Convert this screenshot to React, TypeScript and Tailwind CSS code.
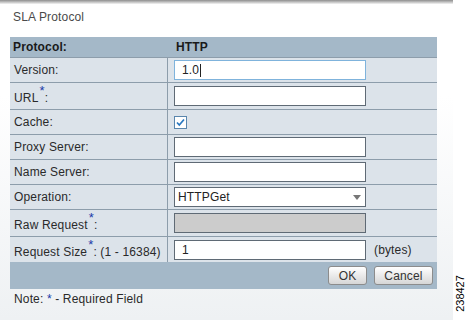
import React from "react";

const Star = () => (
  <span className="relative top-[-7px] ml-[1px] text-[13px] leading-none text-[#1a3aa8]">*</span>
);

function Row({
  label,
  h,
  children,
}: {
  label: React.ReactNode;
  h: string;
  children?: React.ReactNode;
}) {
  return (
    <div className={`flex border-t border-[#8d9dab] bg-[#dce3ea] ${h}`}>
      <div className="flex w-[158px] items-center border-r border-[#8d9dab] pl-[4px] text-[#2a2a2a]">
        {label}
      </div>
      <div className="flex flex-1 items-center pl-[6px]">{children}</div>
    </div>
  );
}

const Input = ({ value, focus, disabled }: { value?: string; focus?: boolean; disabled?: boolean }) => (
  <div
    className={`flex h-[20px] w-[192px] items-center border pl-[7px] text-[12px] text-[#222] ${
      focus ? "border-[#7fb3dc]" : "border-[#5f6a75]"
    } ${disabled ? "bg-[#cccccc]" : "bg-white"}`}
  >
    {value}
    {focus && <span className="ml-[1px] inline-block h-[13px] w-[1px] bg-[#222]" />}
  </div>
);

export default function App() {
  return (
    <div className="relative flex h-[320px] w-[466px] bg-white font-['Liberation_Sans',Arial,sans-serif] text-[12px] tracking-[0.15px]">
      <div className="flex h-full w-[453px] flex-col bg-gradient-to-b from-white from-30% to-[#eef1f3]">
        <div className="h-[4px] bg-gradient-to-b from-[#8e8e8e] to-[#f4f4f4]" />
        <div className="pl-[13px] pt-[6px] leading-[14px] text-[#4a4a4a]">SLA Protocol</div>
        <div className="ml-[10px] mt-[13px] w-[427px]">
          <div className="flex h-[20px] items-center bg-[#a4b8c8] font-bold text-[#1a1a1a]">
            <div className="w-[158px] pl-[3px]">Protocol:</div>
            <div className="pl-[8px]">HTTP</div>
          </div>
          <Row label="Version:" h="h-[25px]">
            <Input value="1.0" focus />
          </Row>
          <Row
            label={
              <span className="mt-[4px]">
                URL<Star />:
              </span>
            }
            h="h-[27px]"
          >
            <Input />
          </Row>
          <Row label="Cache:" h="h-[25px]">
            <svg width="13" height="13" viewBox="0 0 13 13" className="ml-[0px]">
              <rect x="0.5" y="0.5" width="12" height="12" fill="#fff" stroke="#5a86ad" />
              <path d="M3 6.5 L5.3 9 L10 3.5" fill="none" stroke="#2a78c0" strokeWidth="1.7" />
            </svg>
          </Row>
          <Row label="Proxy Server:" h="h-[25px]">
            <Input />
          </Row>
          <Row label="Name Server:" h="h-[25px]">
            <Input />
          </Row>
          <Row label="Operation:" h="h-[25px]">
            <div className="flex h-[20px] w-[192px] items-center justify-between border border-[#5f6a75] bg-white pl-[3px] pr-[4px] text-[12px] text-[#222]">
              <span>HTTPGet</span>
              <svg width="8" height="5" viewBox="0 0 8 5">
                <path d="M0 0 H8 L4 5 Z" fill="#777" />
              </svg>
            </div>
          </Row>
          <Row
            label={
              <span className="mt-[4px]">
                Raw Request<Star />:
              </span>
            }
            h="h-[27px]"
          >
            <Input disabled />
          </Row>
          <Row
            label={
              <span className="mt-[4px]">
                Request Size<Star />: (1 - 16384)
              </span>
            }
            h="h-[26px]"
          >
            <Input value="1" />
            <span className="ml-[8px] text-[#2a2a2a]">(bytes)</span>
          </Row>
          <div className="flex h-[27px] items-center justify-end gap-[7px] bg-[#a4b8c8] pr-[4px]">
            <button className="h-[19px] w-[39px] rounded-[3px] border border-[#8c8c8c] bg-gradient-to-b from-white to-[#d6d6d6] text-[12px] leading-none text-[#333]">
              OK
            </button>
            <button className="h-[19px] w-[59px] rounded-[3px] border border-[#8c8c8c] bg-gradient-to-b from-white to-[#d6d6d6] text-[12px] leading-none text-[#333]">
              Cancel
            </button>
          </div>
        </div>
        <div className="mt-[3px] pl-[14px] leading-[14px] text-[#2a2a2a]">
          Note: <span className="text-[#1a3aa8]">*</span> - Required Field
        </div>
      </div>
      <div className="absolute left-[455px] top-[270px] flex h-[47px] w-[10px] items-center justify-center">
        <span className="block -rotate-90 whitespace-nowrap text-[11px] leading-none tracking-normal text-black">238427</span>
      </div>
    </div>
  );
}
